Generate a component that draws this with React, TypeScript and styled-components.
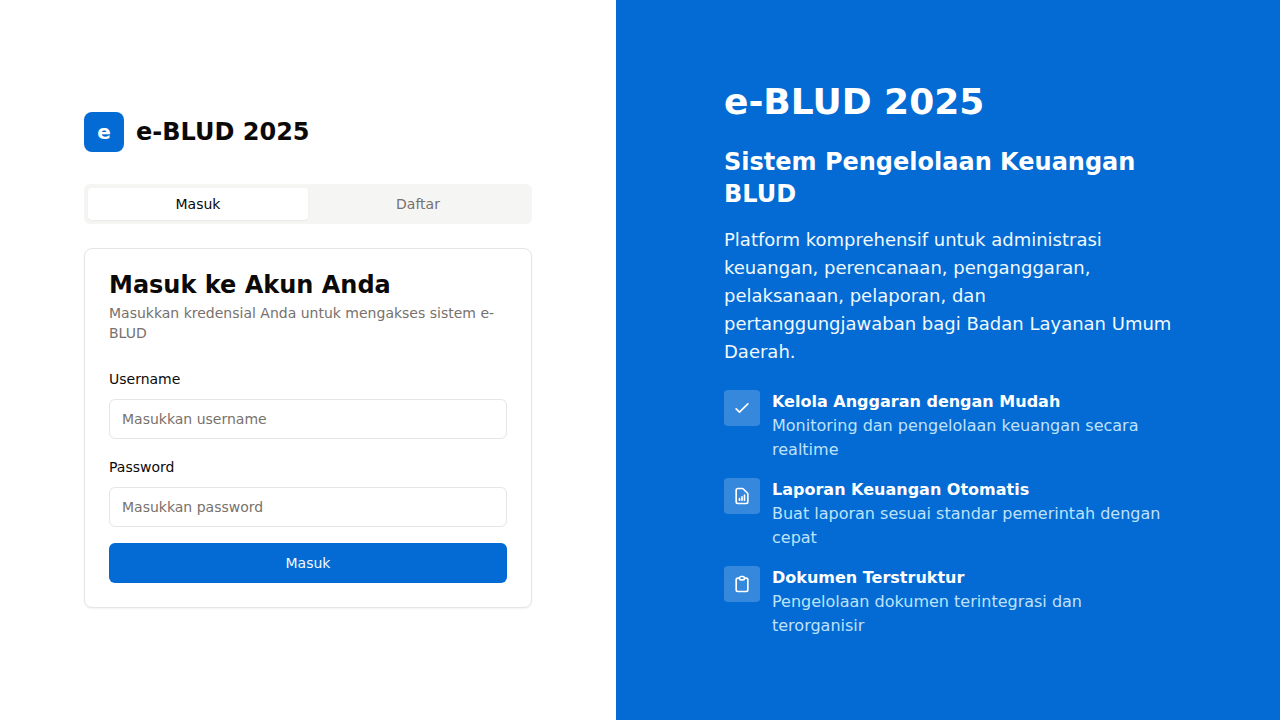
import React, { useState } from "react";
import styled, { createGlobalStyle } from "styled-components";

const color = {
  primary: "#036bd3",
  foreground: "#0c0a09",
  muted: "#f5f5f4",
  mutedText: "#78716c",
  border: "#e7e5e4",
  white: "#ffffff",
  iceBlue: "#f0f9ff",
  paleBlue: "#bfe2fc",
};

const GlobalStyle = createGlobalStyle`
  *, *::before, *::after { box-sizing: border-box; }
  body {
    margin: 0;
    background: ${color.white};
    color: ${color.foreground};
    font-family: "DejaVu Sans", sans-serif;
    font-size: 16px;
    line-height: 24px;
  }
  h1, h2, h3, p, ul { margin: 0; padding: 0; }
  button, input { font: inherit; }
`;

const Page = styled.div`
  display: flex;
  min-height: 100vh;
  @media (max-width: 900px) {
    flex-direction: column;
  }
`;

const FormSide = styled.main`
  flex: 1 1 0;
  display: flex;
  align-items: center;
  justify-content: center;
  padding: 48px 24px;
`;

const InfoSide = styled.aside`
  flex: 1 1 0;
  display: flex;
  align-items: center;
  justify-content: center;
  padding: 48px;
  background: ${color.primary};
  color: ${color.white};
`;

const Column = styled.div`
  width: 100%;
  max-width: 448px;
`;

const Brand = styled.div`
  display: flex;
  align-items: center;
  gap: 12px;
  margin-bottom: 32px;
`;

const BrandMark = styled.span`
  display: flex;
  align-items: center;
  justify-content: center;
  width: 40px;
  height: 40px;
  border-radius: 8px;
  background: ${color.primary};
  color: ${color.white};
  font-size: 20px;
  font-weight: 700;
  line-height: 28px;
`;

const BrandName = styled.h1`
  font-size: 24px;
  line-height: 32px;
  font-weight: 700;
`;

const TabList = styled.div`
  display: grid;
  grid-template-columns: 1fr 1fr;
  padding: 4px;
  margin-bottom: 24px;
  border-radius: 6px;
  background: ${color.muted};
`;

const Tab = styled.button<{ $active: boolean }>`
  padding: 6px 12px;
  border: 0;
  border-radius: 4px;
  background: ${(p) => (p.$active ? color.white : "transparent")};
  color: ${(p) => (p.$active ? color.foreground : color.mutedText)};
  box-shadow: ${(p) => (p.$active ? "0 1px 2px rgba(0, 0, 0, 0.05)" : "none")};
  font-size: 14px;
  line-height: 20px;
  cursor: pointer;
`;

const Card = styled.section`
  padding: 24px;
  border: 1px solid ${color.border};
  border-radius: 8px;
  background: ${color.white};
  box-shadow: 0 1px 2px rgba(0, 0, 0, 0.05);
`;

const CardHeader = styled.header`
  display: flex;
  flex-direction: column;
  gap: 6px;
  margin-bottom: 24px;
`;

const CardTitle = styled.h2`
  font-size: 24px;
  line-height: 24px;
  font-weight: 600;
`;

const CardText = styled.p`
  color: ${color.mutedText};
  font-size: 14px;
  line-height: 20px;
`;

const Form = styled.form`
  display: flex;
  flex-direction: column;
  gap: 16px;
`;

const Field = styled.div`
  display: flex;
  flex-direction: column;
  gap: 8px;
`;

const Label = styled.label`
  font-size: 14px;
  line-height: 24px;
`;

const Input = styled.input`
  width: 100%;
  height: 40px;
  padding: 8px 12px;
  border: 1px solid ${color.border};
  border-radius: 6px;
  background: ${color.white};
  color: ${color.foreground};
  font-size: 14px;
  line-height: 20px;
  &::placeholder {
    color: ${color.mutedText};
    opacity: 1;
  }
`;

const Submit = styled.button`
  height: 40px;
  border: 0;
  border-radius: 6px;
  background: ${color.primary};
  color: ${color.iceBlue};
  font-size: 14px;
  line-height: 20px;
  cursor: pointer;
`;

const Headline = styled.h2`
  margin-bottom: 24px;
  font-size: 36px;
  line-height: 40px;
  font-weight: 700;
`;

const Subhead = styled.h3`
  margin-bottom: 16px;
  font-size: 24px;
  line-height: 32px;
  font-weight: 600;
`;

const Lead = styled.p`
  margin-bottom: 24px;
  color: ${color.iceBlue};
  font-size: 18px;
  line-height: 28px;
`;

const FeatureList = styled.ul`
  display: flex;
  flex-direction: column;
  gap: 16px;
  list-style: none;
`;

const Feature = styled.li`
  display: flex;
  align-items: flex-start;
  gap: 12px;
`;

const FeatureIcon = styled.span`
  display: flex;
  flex-shrink: 0;
  padding: 8px;
  border-radius: 4px;
  background: rgba(255, 255, 255, 0.2);
`;

const FeatureTitle = styled.p`
  font-weight: 600;
`;

const FeatureText = styled.p`
  color: ${color.paleBlue};
`;

const features = [
  {
    title: "Kelola Anggaran dengan Mudah",
    text: "Monitoring dan pengelolaan keuangan secara realtime",
    path: "M5 13l4 4L19 7",
  },
  {
    title: "Laporan Keuangan Otomatis",
    text: "Buat laporan sesuai standar pemerintah dengan cepat",
    path: "M9 17v-2m3 2v-4m3 4v-6m2 10H7a2 2 0 01-2-2V5a2 2 0 012-2h5.586a1 1 0 01.707.293l5.414 5.414a1 1 0 01.293.707V19a2 2 0 01-2 2z",
  },
  {
    title: "Dokumen Terstruktur",
    text: "Pengelolaan dokumen terintegrasi dan terorganisir",
    path: "M9 5H7a2 2 0 00-2 2v12a2 2 0 002 2h10a2 2 0 002-2V7a2 2 0 00-2-2h-2M9 5a2 2 0 002 2h2a2 2 0 002-2M9 5a2 2 0 012-2h2a2 2 0 012 2",
  },
];

const tabs = ["Masuk", "Daftar"];

export default function App() {
  const [active, setActive] = useState(tabs[0]);

  return (
    <>
      <GlobalStyle />
      <Page>
        <FormSide>
          <Column>
            <Brand>
              <BrandMark aria-hidden="true">e</BrandMark>
              <BrandName>e-BLUD 2025</BrandName>
            </Brand>
            <TabList role="tablist">
              {tabs.map((tab) => (
                <Tab
                  key={tab}
                  type="button"
                  role="tab"
                  aria-selected={active === tab}
                  $active={active === tab}
                  onClick={() => setActive(tab)}
                >
                  {tab}
                </Tab>
              ))}
            </TabList>
            <Card>
              <CardHeader>
                <CardTitle>Masuk ke Akun Anda</CardTitle>
                <CardText>Masukkan kredensial Anda untuk mengakses sistem e-BLUD</CardText>
              </CardHeader>
              <Form onSubmit={(event) => event.preventDefault()}>
                <Field>
                  <Label htmlFor="username">Username</Label>
                  <Input id="username" name="username" placeholder="Masukkan username" />
                </Field>
                <Field>
                  <Label htmlFor="password">Password</Label>
                  <Input id="password" name="password" type="password" placeholder="Masukkan password" />
                </Field>
                <Submit type="submit">Masuk</Submit>
              </Form>
            </Card>
          </Column>
        </FormSide>
        <InfoSide>
          <Column>
            <Headline>e-BLUD 2025</Headline>
            <Subhead>Sistem Pengelolaan Keuangan BLUD</Subhead>
            <Lead>
              Platform komprehensif untuk administrasi keuangan, perencanaan, penganggaran,
              pelaksanaan, pelaporan, dan pertanggungjawaban bagi Badan Layanan Umum Daerah.
            </Lead>
            <FeatureList>
              {features.map((feature) => (
                <Feature key={feature.title}>
                  <FeatureIcon>
                    <svg
                      width="20"
                      height="20"
                      viewBox="0 0 24 24"
                      fill="none"
                      stroke="currentColor"
                      strokeWidth="2"
                      strokeLinecap="round"
                      strokeLinejoin="round"
                      aria-hidden="true"
                    >
                      <path d={feature.path} />
                    </svg>
                  </FeatureIcon>
                  <div>
                    <FeatureTitle>{feature.title}</FeatureTitle>
                    <FeatureText>{feature.text}</FeatureText>
                  </div>
                </Feature>
              ))}
            </FeatureList>
          </Column>
        </InfoSide>
      </Page>
    </>
  );
}
